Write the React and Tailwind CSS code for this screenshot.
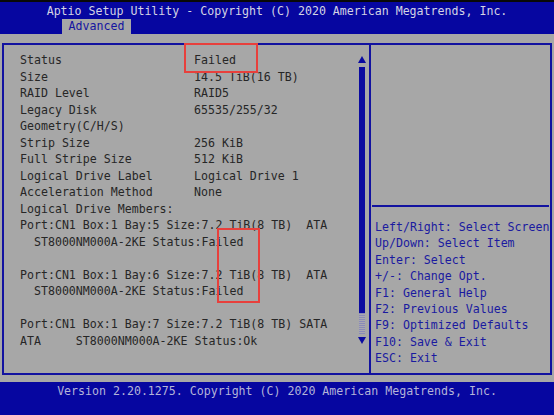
import React from "react";

const mono = { fontFamily: '"DejaVu Sans Mono", "Liberation Mono", monospace' };

const fields = [
  ["Status", "Failed"],
  ["Size", "14.5 TiB(16 TB)"],
  ["RAID Level", "RAID5"],
  ["Legacy Disk", "65535/255/32"],
  ["Geometry(C/H/S)", ""],
  ["Strip Size", "256 KiB"],
  ["Full Stripe Size", "512 KiB"],
  ["Logical Drive Label", "Logical Drive 1"],
  ["Acceleration Method", "None"],
];

const members = [
  "Logical Drive Members:",
  "Port:CN1 Box:1 Bay:5 Size:7.2 TiB(8 TB)  ATA",
  "  ST8000NM000A-2KE Status:Failed",
  "",
  "Port:CN1 Box:1 Bay:6 Size:7.2 TiB(8 TB)  ATA",
  "  ST8000NM000A-2KE Status:Failed",
  "",
  "Port:CN1 Box:1 Bay:7 Size:7.2 TiB(8 TB) SATA",
  "ATA     ST8000NM000A-2KE Status:Ok",
];

const help = [
  "Left/Right: Select Screen",
  "Up/Down: Select Item",
  "Enter: Select",
  "+/-: Change Opt.",
  "F1: General Help",
  "F2: Previous Values",
  "F9: Optimized Defaults",
  "F10: Save & Exit",
  "ESC: Exit",
];

function ScrollBar() {
  return (
    <div className="w-[8px] mr-[3px] flex flex-col items-center pt-[11px] pb-[29px]">
      <div className="w-0 h-0 border-l-[4px] border-r-[4px] border-b-[7px] border-l-transparent border-r-transparent border-b-[#0a0aa0]" />
      <div className="w-[6px] h-[246px] mt-[4px] bg-[#0a0aa0]" />
      <div className="w-[6px] flex-1 bg-[repeating-linear-gradient(0deg,#8a8ab8_0px,#8a8ab8_1px,#a8a8b0_1px,#a8a8b0_2px)]" />
      <div className="w-0 h-0 mt-[3px] border-l-[4px] border-r-[4px] border-t-[7px] border-l-transparent border-r-transparent border-t-[#0a0aa0]" />
    </div>
  );
}

export default function App() {
  return (
    <div
      className="w-[554px] h-[415px] flex flex-col bg-[#a7a7a7] text-[11.6px] overflow-hidden"
      style={mono}
    >
      {/* header */}
      <div className="h-[34px] bg-[#0606a0] border-t-2 border-[#080808] flex flex-col">
        <div className="h-[17px] pt-[1px] leading-[16px] text-center text-[#d4d4e4]">
          Aptio Setup Utility - Copyright (C) 2020 American Megatrends, Inc.
        </div>
        <div className="ml-[62px] w-[69px] h-[15px] leading-[15px] bg-[#a7a7a7] text-[#1414a0] text-center">
          Advanced
        </div>
      </div>

      {/* body */}
      <div className="flex-1 pt-[9px] pb-[7px] px-[2px]">
        <div className="h-full border-2 border-[#1212a0] flex relative">
          <div className="w-[367px] flex border-r-2 border-[#1212a0]">
            <div className="flex-1 pl-[16px] pt-[7px] leading-[16.5px] text-[#262626] whitespace-pre">
              {fields.map(([k, v]) => (
                <div key={k} className="flex h-[16.5px]">
                  <span className="w-[174px]">{k}</span>
                  <span>{v}</span>
                </div>
              ))}
              {members.map((line, i) => (
                <div key={i} className="h-[16.5px]">
                  {line}
                </div>
              ))}
            </div>
            <ScrollBar />
          </div>

          <div className="flex-1 flex flex-col">
            <div className="h-[162px] border-b-2 border-[#1212a0] mx-[1px]" />
            <div className="pl-[4px] pt-[12px] leading-[16.4px] text-[#1a1aa0] whitespace-pre">
              {help.map((h) => (
                <div key={h}>{h}</div>
              ))}
            </div>
          </div>

          {/* red callouts */}
          <div className="absolute left-[180px] top-[-2px] w-[74px] h-[30px] border-2 border-[#e8403c]" />
          <div className="absolute left-[213px] top-[183px] w-[43px] h-[75px] border-2 border-[#e8403c]" />
        </div>
      </div>

      {/* footer */}
      <div className="h-[33px] bg-[#0606a0] pt-[1px] leading-[16px] text-center text-[#b4b4d8]">
        Version 2.20.1275. Copyright (C) 2020 American Megatrends, Inc.
      </div>
    </div>
  );
}
